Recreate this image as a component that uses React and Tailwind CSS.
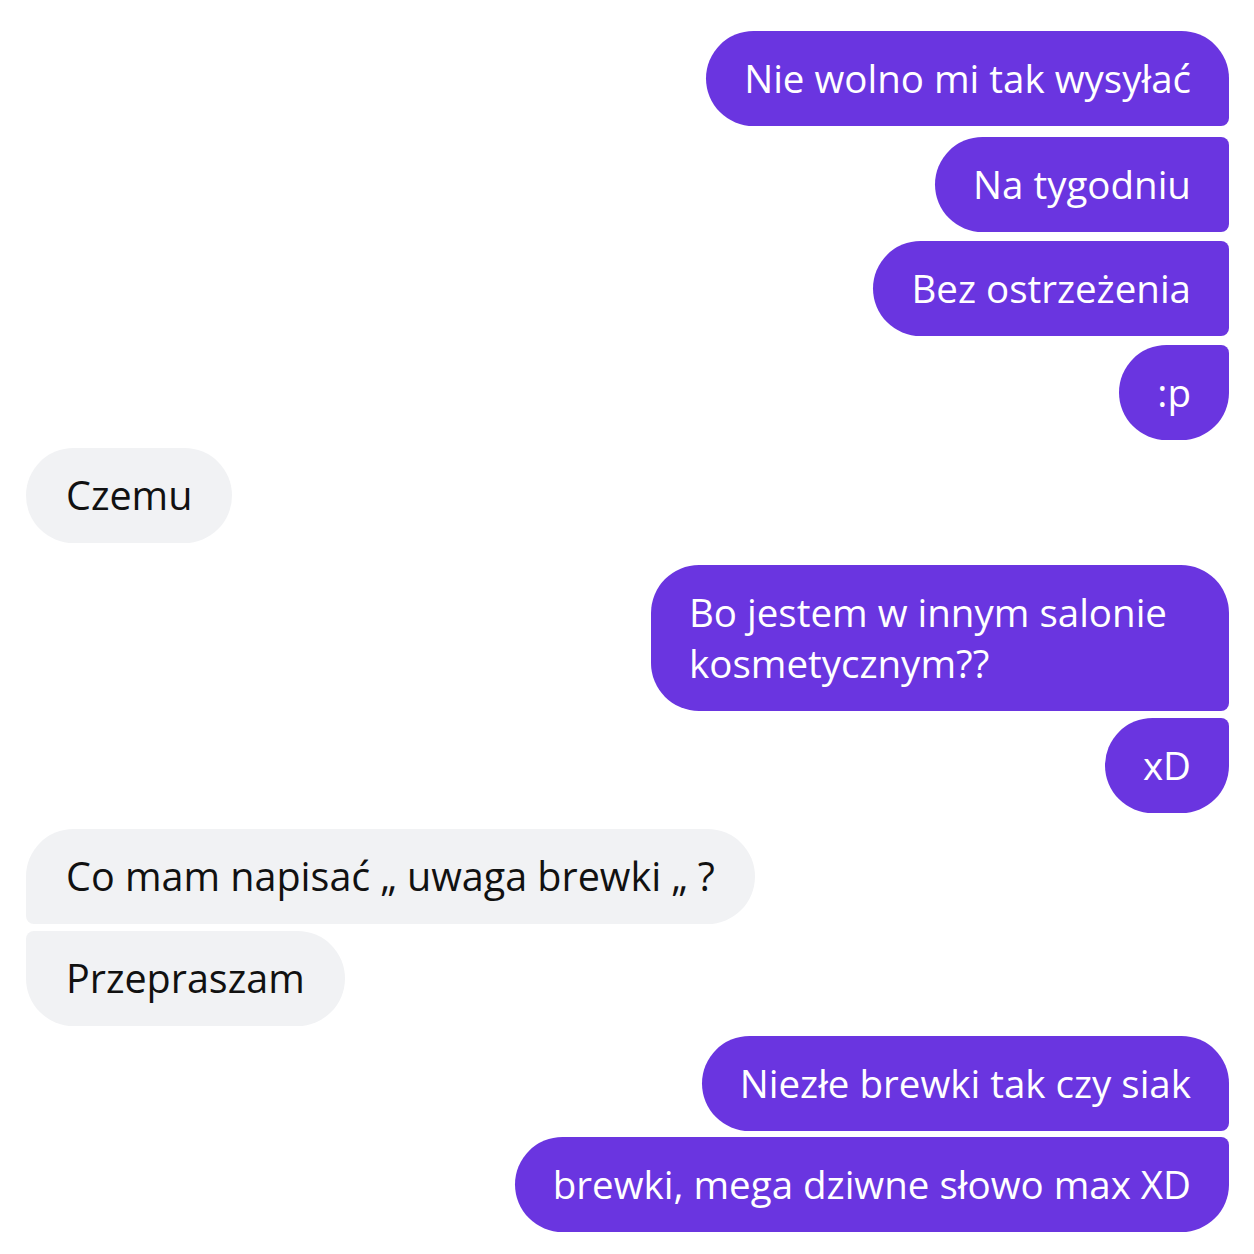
import React from "react";

const messages = [
  { text: "Nie wolno mi tak wysyłać", me: true, shape: "first", gap: "mt-0" },
  { text: "Na tygodniu", me: true, shape: "middle", gap: "mt-[11px]" },
  { text: "Bez ostrzeżenia", me: true, shape: "middle", gap: "mt-[9px]" },
  { text: ":p", me: true, shape: "last", gap: "mt-[9px]" },
  { text: "Czemu", me: false, shape: "single", gap: "mt-[8px]" },
  { text: "Bo jestem w innym salonie kosmetycznym??", me: true, shape: "first", gap: "mt-[22px]", wide: true },
  { text: "xD", me: true, shape: "last", gap: "mt-[7px]" },
  { text: "Co mam napisać „ uwaga brewki „ ?", me: false, shape: "first", gap: "mt-[16px]" },
  { text: "Przepraszam", me: false, shape: "last", gap: "mt-[7px]" },
  { text: "Niezłe brewki tak czy siak", me: true, shape: "first", gap: "mt-[10px]" },
  { text: "brewki, mega dziwne słowo max XD", me: true, shape: "last", gap: "mt-[6px]" },
];

const mineShape = {
  first: "rounded-[48px] rounded-br-[8px]",
  middle: "rounded-[48px] rounded-tr-[8px] rounded-br-[8px]",
  last: "rounded-[48px] rounded-tr-[8px]",
  single: "rounded-[48px]",
};

const theirShape = {
  first: "rounded-[48px] rounded-bl-[8px]",
  middle: "rounded-[48px] rounded-tl-[8px] rounded-bl-[8px]",
  last: "rounded-[48px] rounded-tl-[8px]",
  single: "rounded-[48px]",
};

const Bubble = ({ msg }) => {
  if (msg.me) {
    return (
      <div className={`flex justify-end ${msg.gap}`}>
        <div
          className={`px-[38px] py-[22px] text-[38.5px] leading-[51px] bg-[#6a35e0] text-white ${
            mineShape[msg.shape]
          } ${msg.wide ? "w-[578px]" : ""}`}
        >
          {msg.text}
        </div>
      </div>
    );
  }
  return (
    <div className={`flex justify-start ${msg.gap}`}>
      <div
        className={`px-[40px] py-[22px] text-[39.5px] leading-[51px] bg-[#f1f2f4] text-[#111111] ${
          theirShape[msg.shape]
        }`}
      >
        {msg.text}
      </div>
    </div>
  );
};

export default function App() {
  return (
    <div className="w-[1254px] h-[1254px] bg-white pt-[31px] pl-[26px] pr-[25px] overflow-hidden font-['Open_Sans','Noto_Sans',sans-serif]">
      {messages.map((m, i) => (
        <Bubble key={i} msg={m} />
      ))}
    </div>
  );
}
